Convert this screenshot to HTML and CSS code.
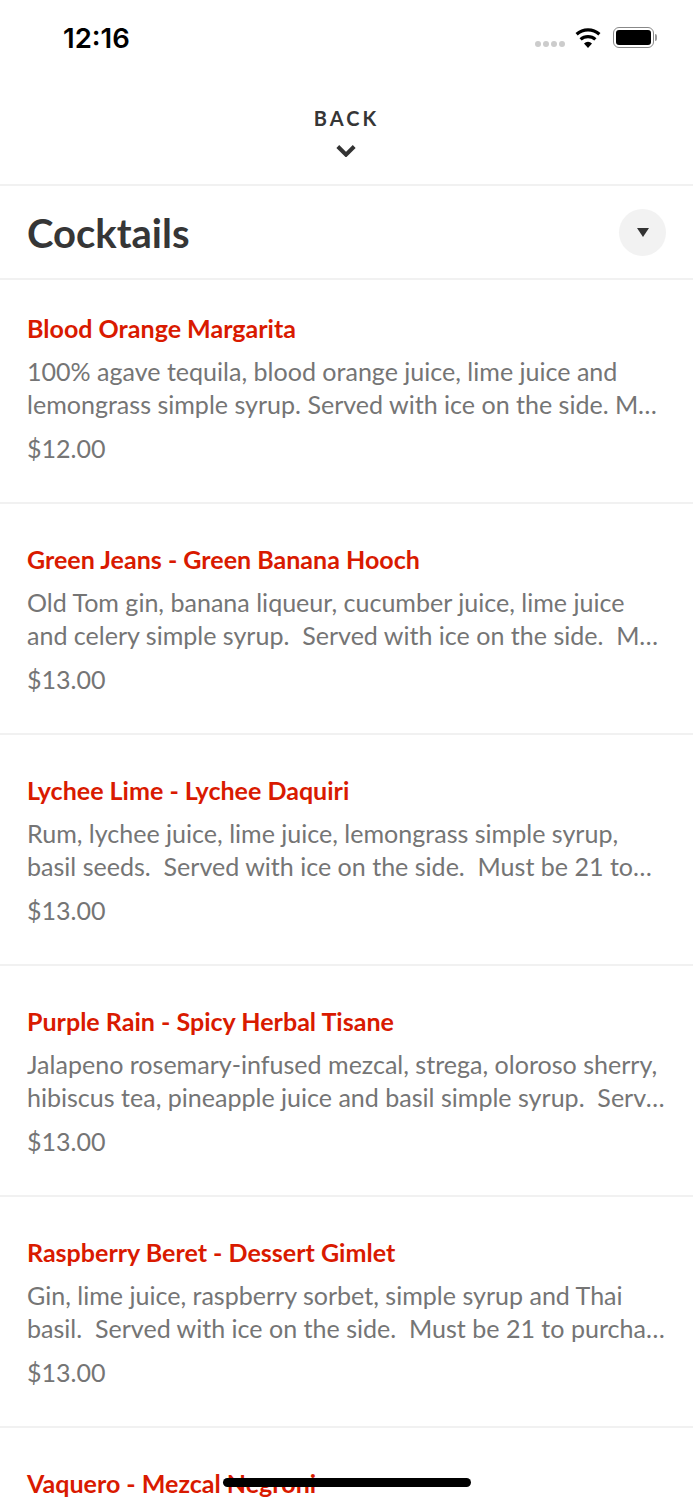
FILE: index.html
```html
<!DOCTYPE html>
<html lang="en">
<head>
  <meta charset="UTF-8" />
  <title>Cocktails</title>
  <meta name="viewport" content="width=device-width, initial-scale=1.0" />
  <link rel="stylesheet" href="styles.css">
</head>
<body>

<div class="screen">
  <div class="status-bar">
    <span class="time">12:16</span>
    <div class="status-icons">
      <div class="signal"><i></i><i></i><i></i><i></i></div>
      <svg class="wifi" width="26" height="21" viewBox="0 0 26 21">
        <path d="M13 21l-4-4.6a6 6 0 0 1 8 0z" fill="#000"/>
        <path d="M5.6 12.4a11 11 0 0 1 14.8 0" fill="none" stroke="#000" stroke-width="3.2"/>
        <path d="M1.6 7.2a17 17 0 0 1 22.8 0" fill="none" stroke="#000" stroke-width="3.2"/>
      </svg>
      <div class="battery"><div class="battery-fill"></div></div>
      <div class="battery-cap"></div>
    </div>
  </div>

  <div class="back">
    <span class="back-label">BACK</span>
    <svg class="back-chevron" width="20" height="13" viewBox="0 0 20 13">
      <path d="M1.8 2.5l8.2 8.2 8.2-8.2" fill="none" stroke="#333" stroke-width="4"/>
    </svg>
  </div>

  <div class="section-header">
    <h1>Cocktails</h1>
    <div class="collapse-btn"><span class="caret"></span></div>
  </div>

  <div class="item first">
    <div class="item-name">Blood Orange Margarita</div>
    <div class="item-desc">
      <div class="desc-line">100% agave tequila, blood orange juice, lime juice and</div>
      <div class="desc-line">lemongrass simple syrup. Served with ice on the side. Must be 21 to purchase.</div>
    </div>
    <div class="item-price">$12.00</div>
  </div>
  <div class="item">
    <div class="item-name">Green Jeans - Green Banana Hooch</div>
    <div class="item-desc">
      <div class="desc-line">Old Tom gin, banana liqueur, cucumber juice, lime juice</div>
      <div class="desc-line">and celery simple syrup.&nbsp; Served with ice on the side.&nbsp; Must be 21 to purchase.</div>
    </div>
    <div class="item-price">$13.00</div>
  </div>
  <div class="item">
    <div class="item-name">Lychee Lime - Lychee Daquiri</div>
    <div class="item-desc">
      <div class="desc-line">Rum, lychee juice, lime juice, lemongrass simple syrup,</div>
      <div class="desc-line">basil seeds.&nbsp; Served with ice on the side.&nbsp; Must be 21 to…</div>
    </div>
    <div class="item-price">$13.00</div>
  </div>
  <div class="item">
    <div class="item-name">Purple Rain - Spicy Herbal Tisane</div>
    <div class="item-desc">
      <div class="desc-line">Jalapeno rosemary-infused mezcal, strega, oloroso sherry,</div>
      <div class="desc-line">hibiscus tea, pineapple juice and basil simple syrup.&nbsp; Served with ice on the side.</div>
    </div>
    <div class="item-price">$13.00</div>
  </div>
  <div class="item">
    <div class="item-name">Raspberry Beret - Dessert Gimlet</div>
    <div class="item-desc">
      <div class="desc-line">Gin, lime juice, raspberry sorbet, simple syrup and Thai</div>
      <div class="desc-line">basil.&nbsp; Served with ice on the side.&nbsp; Must be 21 to purchase.</div>
    </div>
    <div class="item-price">$13.00</div>
  </div>
  <div class="item">
    <div class="item-name">Vaquero - Mezcal Negroni</div>
  </div>

  <div class="home-indicator"></div>
</div>

</body>
</html>
```

FILE: styles.css
```css
* {
  box-sizing: border-box;
}
body {
  margin: 0;
  background: #fff;
  font-family: 'Lato', sans-serif;
  color: #363636;
}
.screen {
  position: relative;
  height: 1500px;
  overflow: hidden;
}

/* Status bar */
.status-bar {
  height: 76px;
  display: flex;
  justify-content: space-between;
  align-items: center;
  padding: 0 36px 0 63px;
}
.time {
  font-family: 'Inter', sans-serif;
  font-size: 27.5px;
  font-weight: 600;
  color: #000;
}
.status-icons {
  display: flex;
  align-items: center;
  margin-top: -1px;
}
.signal {
  display: flex;
  gap: 2px;
  margin: 12px 10px 0 0;
}
.signal i {
  width: 6px;
  height: 6px;
  border-radius: 50%;
  background: #ccc;
}
.wifi {
  margin-right: 12px;
}
.battery {
  width: 41px;
  height: 21px;
  padding: 2px;
  border: 1.5px solid #888;
  border-radius: 6px;
}
.battery-fill {
  height: 100%;
  background: #000;
  border-radius: 3px;
}
.battery-cap {
  width: 2px;
  height: 7px;
  margin-left: 1px;
  background: #999;
  border-radius: 0 2px 2px 0;
}

/* Back link */
.back {
  height: 108px;
  display: flex;
  flex-direction: column;
  align-items: center;
  padding-top: 30px;
}
.back-label {
  font-size: 20px;
  line-height: 24px;
  font-weight: 700;
  letter-spacing: 3px;
}
.back-chevron {
  margin: 14px 0 0 -2px;
}

/* Section header */
.section-header {
  height: 96px;
  display: flex;
  justify-content: space-between;
  align-items: center;
  padding: 0 27px;
  border-top: 2px solid #f1f1f1;
  border-bottom: 2px solid #f1f1f1;
}
h1 {
  margin: 2px 0 0;
  font-size: 40px;
  font-weight: 700;
}
.collapse-btn {
  width: 47px;
  height: 47px;
  border-radius: 50%;
  background: #f2f2f2;
  display: flex;
  align-items: center;
  justify-content: center;
}
.caret {
  border-left: 6px solid transparent;
  border-right: 6px solid transparent;
  border-top: 9px solid #333;
}

/* Menu items */
.item {
  height: 231px;
  padding: 36px 27px 0;
  border-bottom: 2px solid #f1f1f1;
}
.item.first {
  height: 224px;
  padding-top: 29px;
}
.item-name {
  font-size: 25.05px;
  line-height: 38px;
  font-weight: 700;
  color: #d91a00;
}
.item-desc {
  margin-top: 8px;
  font-size: 25.05px;
  line-height: 33px;
  color: #757575;
}
.desc-line {
  white-space: nowrap;
  overflow: hidden;
  text-overflow: ellipsis;
}
.item-price {
  margin-top: 11px;
  font-size: 25.05px;
  line-height: 33px;
  color: #757575;
}

.home-indicator {
  position: absolute;
  left: 223px;
  bottom: 13px;
  width: 248px;
  height: 9px;
  border-radius: 5px;
  background: #000;
}
```
